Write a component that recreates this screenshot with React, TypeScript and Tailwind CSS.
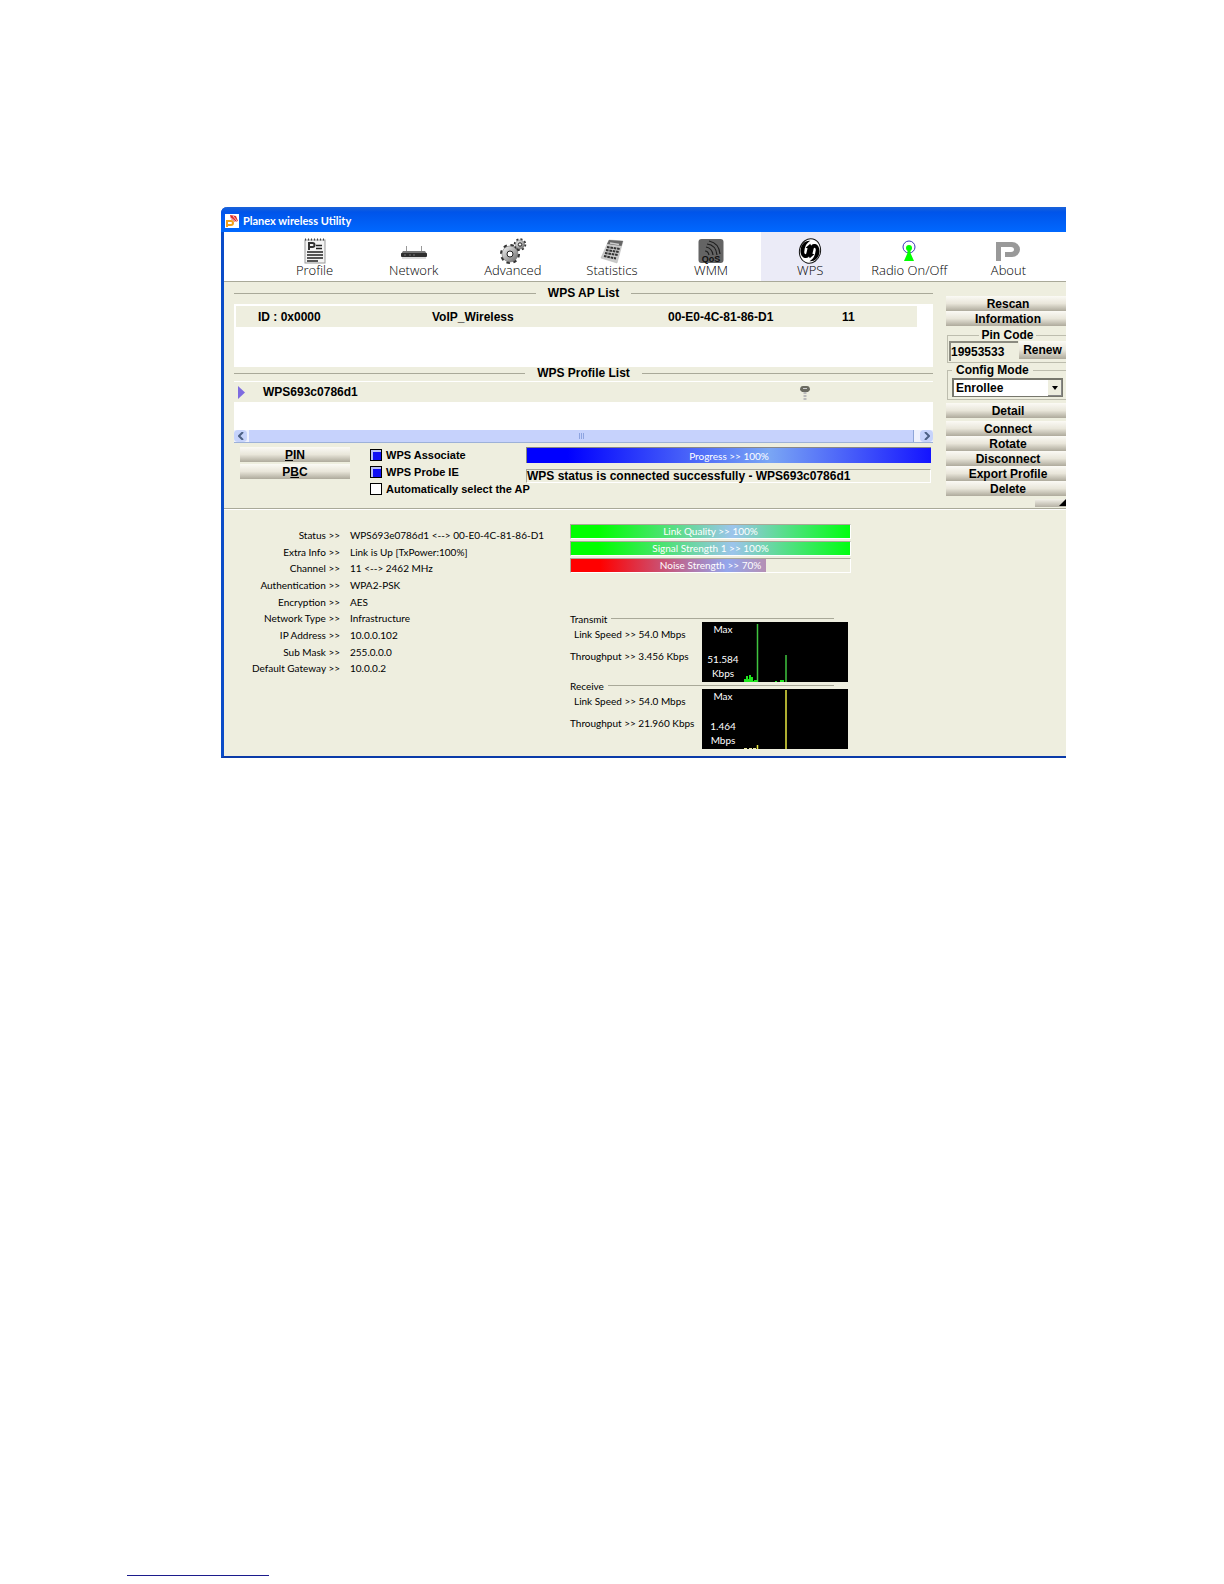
import type { ReactNode } from "react";
import clsx from "clsx";

const tabs = [
  { name: "Profile", icon: <ProfileIcon /> },
  { name: "Network", icon: <NetworkIcon /> },
  { name: "Advanced", icon: <GearsIcon /> },
  { name: "Statistics", icon: <CalculatorIcon /> },
  { name: "WMM", icon: <QosIcon /> },
  { name: "WPS", icon: <WpsIcon /> },
  { name: "Radio On/Off", icon: <RadioIcon /> },
  { name: "About", icon: <AboutIcon /> },
];

const status = [
  ["Status", "WPS693e0786d1 <--> 00-E0-4C-81-86-D1"],
  ["Extra Info", "Link is Up [TxPower:100%]"],
  ["Channel", "11 <--> 2462 MHz"],
  ["Authentication", "WPA2-PSK"],
  ["Encryption", "AES"],
  ["Network Type", "Infrastructure"],
  ["IP Address", "10.0.0.102"],
  ["Sub Mask", "255.0.0.0"],
  ["Default Gateway", "10.0.0.2"],
];

function ProfileIcon() {
  return (
    <svg width="26" height="26" viewBox="0 0 26 26">
      <rect x="3" y="2" width="20" height="23" fill="#f4f4f4" stroke="#999" />
      <path d="M3 1.500h20" stroke="#444" strokeWidth="2" strokeDasharray="1 2" />
      <path d="M7 12V5h3.500a2 2 0 0 1 0 4H7" fill="none" stroke="#333" strokeWidth="2" />
      <path d="M14 7.500h6M14 10.500h6M5 14h16M5 17h16M5 20h16M5 23h11" stroke="#222" strokeWidth="1.500" />
    </svg>
  );
}

function NetworkIcon() {
  return (
    <svg width="26" height="26" viewBox="0 0 26 26">
      <path d="M5.500 8v6M20.500 8v6" stroke="#999" />
      <path d="M2 13h22l2 3H0z" fill="#777" />
      <rect x="0" y="15" width="26" height="4" rx="1" fill="#2f2f2f" />
      <path d="M3 17h2M8 17h2M12 17h2" stroke="#777" />
      <path d="M1 20h24" stroke="#bbb" />
    </svg>
  );
}

function GearsIcon() {
  return (
    <svg width="28" height="26" viewBox="0 0 28 26">
      <defs>
        <linearGradient id="steel" x1="0" y1="0" x2="1" y2="1">
          <stop offset="0" stopColor="#fafafa" />
          <stop offset="1" stopColor="#666" />
        </linearGradient>
      </defs>
      <circle cx="11" cy="16" r="8.500" fill="none" stroke="#333" strokeWidth="3" strokeDasharray="3.300 3.400" />
      <circle cx="11" cy="16" r="8" fill="url(#steel)" stroke="#777" strokeWidth=".6" />
      <circle cx="11" cy="16" r="3" fill="#fff" stroke="#222" />
      <circle cx="21" cy="6.500" r="5" fill="none" stroke="#333" strokeWidth="2.500" strokeDasharray="1.900 2" />
      <circle cx="21" cy="6.500" r="4.500" fill="url(#steel)" stroke="#777" strokeWidth=".6" />
      <circle cx="21" cy="6.500" r="1.700" fill="#fff" stroke="#222" />
    </svg>
  );
}

function CalculatorIcon() {
  return (
    <svg width="26" height="26" viewBox="0 0 26 26">
      <path d="M10 2l14 1-6 22L2 20z" fill="#c9c9c9" stroke="#bbb" strokeWidth=".6" />
      <path d="M10 2l14 1-1.500 5L8 6z" fill="#666" />
      <path d="M11 5l9 1.500" stroke="#ccc" strokeWidth="1.500" />
      <path d="M8 9l13 2M7 12l13 2M6 15l13 2M5 18l12 2.500" stroke="#333" strokeWidth="2" strokeDasharray="2.600 .8" />
    </svg>
  );
}

function QosIcon() {
  return (
    <svg width="26" height="26" viewBox="0 0 26 26">
      <rect x="0.500" y="1" width="25" height="24" rx="3" fill="#646464" />
      <g fill="none" stroke="#1d1d1d" strokeWidth="1.200">
        <path d="M7 13q3 0 4 4M8 9q6 1 7 8M9 6q9 1 10 11M11 3q10 2 11 13" />
      </g>
      <text x="13" y="24" textAnchor="middle" className="font-['Liberation_Sans'] text-[9px] font-bold" fill="#111">QoS</text>
    </svg>
  );
}

function WpsIcon() {
  return (
    <svg width="26" height="26" viewBox="0 0 26 26">
      <g transform="rotate(14 13 13)">
        <ellipse cx="13" cy="13" rx="10.500" ry="12.300" fill="#fff" stroke="#111" />
        <path d="M11 3C5 4 3 9 3.500 14c.5 4 3 7 6 7 3 0 4-2 4-4V10l1.500.500L11.500 6 8 11l2 0v5c0 2-2.500 1.500-2.500-2C7 9 8 6 11 3z" />
        <path d="M15 23c6-1 8-6 7.500-11-.5-4-3-7-6-7-3 0-4 2-4 4v7l-1.500-.500L14.500 20l3.500-5-2 0v-5c0-2 2.500-1.500 2.500 2 .5 5-.5 8-3.500 11z" />
      </g>
    </svg>
  );
}

function RadioIcon() {
  return (
    <svg width="26" height="26" viewBox="0 0 26 26">
      <circle cx="13" cy="9" r="6" fill="#fff" stroke="#3a35b8" />
      <circle cx="13" cy="10" r="3" fill="#0f0" />
      <path d="M11.500 12h3v3l3.500 8H8l3.500-8z" fill="#0f0" />
    </svg>
  );
}

function AboutIcon() {
  return (
    <svg width="26" height="26" viewBox="0 0 26 26">
      <path d="M1 4h16a8 7.500 0 0 1 0 15h-7v-5h6a3 2.500 0 0 0 0-5H6v14H1z" fill="#999" />
    </svg>
  );
}

function SideButton({ children, className }: { children?: ReactNode; className?: string }) {
  return (
    <button
      className={clsx(
        "flex h-[15px] w-full items-center justify-center bg-linear-to-b from-[#fbfaf5] via-[#e9e6da] to-[#aeaa9c] pl-1 text-xs leading-3 font-bold",
        className,
      )}
    >
      {children}
    </button>
  );
}

function Rule({ children }: { children: ReactNode }) {
  return (
    <div className="flex items-center gap-3 pl-1 text-xs leading-3 font-bold">
      <span className="-ml-1 h-px flex-1 bg-[#a9a999]" />
      <h2>{children}</h2>
      <span className="h-px flex-1 bg-[#a9a999]" />
    </div>
  );
}

function Check({ label, checked }: { label: string; checked?: boolean }) {
  return (
    <label className="flex items-center gap-1 text-[11px] leading-4 font-bold">
      <input
        type="checkbox"
        defaultChecked={checked}
        className="size-3 shrink-0 appearance-none border border-black bg-white checked:bg-[#1010f5] checked:shadow-[inset_1px_1px_0_1px_#b9c0f5]"
      />
      {label}
    </label>
  );
}

function Meter({ label, value, className }: { label: string; value: number; className: string }) {
  return (
    <div className="relative h-[15px] border border-t-[#aaa99a] border-r-white border-b-white border-l-[#aaa99a]">
      <div className={clsx("h-full", className)} style={{ width: `${value}%` }} />
      <span className="absolute inset-0 text-center text-[10px] leading-[13px] text-white">
        {label} &gt;&gt; {value}%
      </span>
    </div>
  );
}

function Traffic({ title, speed, throughput, max, unit, children }: {
  title: string;
  speed: string;
  throughput: string;
  max: string;
  unit: string;
  children: ReactNode;
}) {
  return (
    <section>
      <div className="mr-[17px] flex h-[7px] items-center gap-1">
        <h3>{title}</h3>
        <span className="h-px flex-1 bg-[#a9a999]" />
      </div>
      <div className="flex justify-between pr-[3px]">
        <div className="flex flex-col gap-2 pt-[5px] whitespace-nowrap">
          <p className="pl-1">Link Speed &gt;&gt; {speed}</p>
          <p>Throughput &gt;&gt; {throughput}</p>
        </div>
        <div className="relative h-[60px] w-[146px] shrink-0 bg-black text-white">
          <svg width="146" height="60" viewBox="0 0 146 60" className="absolute inset-0">
            {children}
          </svg>
          <div className="flex h-full w-[42px] flex-col text-center leading-[14px]">
            <span>Max</span>
            <span className="mt-auto">{max}</span>
            <span className="pb-0.5">{unit}</span>
          </div>
        </div>
      </div>
    </section>
  );
}

export default function App() {
  return (
    <div className="flex min-h-screen flex-col bg-white pt-[207px] pb-2 font-['Liberation_Sans',sans-serif] text-black">
      <main className="mr-[158px] ml-[221px] rounded-tl-md border-b-2 border-l-3 border-b-[#0a3aa8] border-l-[#0a4cc8] bg-[#eeeedf]">
        <header className="-ml-[3px] flex h-[25px] items-center gap-1 rounded-tl-md bg-linear-to-b from-[#1a62d8] via-[#0054ea] via-20% to-[#0068ff] pt-0.5 pl-1 text-white">
          <svg width="14" height="14" viewBox="0 0 14 14">
            <path d="M0 0h14v14H0z" fill="#fff" />
            <path d="M5 1l6 1 2 5-3 1-4-3z" fill="#dd2c2c" />
            <path d="M6 4l5 4M8 2l4 5" stroke="#fff" strokeWidth=".7" />
            <path d="M2 13V7h4a2 2 0 0 1 0 4H2" fill="none" stroke="#f2a01c" strokeWidth="2" />
          </svg>
          <h1 className="font-[Lato,sans-serif] text-[11px] leading-4 font-bold">Planex wireless Utility</h1>
        </header>

        <nav className="flex h-[50px] border-b border-[#a9a999] bg-white pr-2 pl-[41px]">
          {tabs.map((tab) => (
            <button
              key={tab.name}
              className={clsx(
                "flex flex-1 flex-col items-center pt-1.5 font-['Open_Sans',sans-serif] text-[13px] leading-3 font-light",
                tab.name === "WPS" && "bg-[#ebebf7]",
              )}
            >
              {tab.icon}
              {tab.name}
            </button>
          ))}
        </nav>

        <div className="flex gap-[13px] border-b border-[#a9a999] pl-2.5">
          <div className="flex-1">
            <div className="pt-[5px] pb-[5px]">
              <Rule>WPS AP List</Rule>
            </div>
            <div className="h-[63px] bg-white pt-0.5 pr-4 pl-0.5">
              <table className="w-full table-fixed bg-[#eeeedf] text-left text-xs font-bold">
                <tbody>
                  <tr className="h-[21px]">
                    <td className="w-[196px] pl-[22px]">ID : 0x0000</td>
                    <td className="w-[236px]">VoIP_Wireless</td>
                    <td className="w-[174px]">00-E0-4C-81-86-D1</td>
                    <td>11</td>
                  </tr>
                </tbody>
              </table>
            </div>
            <div className="pb-0.5">
              <Rule>WPS Profile List</Rule>
            </div>
            <div className="border-t border-white">
              <table className="w-full table-fixed text-left text-xs font-bold">
                <tbody>
                  <tr className="h-5">
                    <td className="w-[29px] pl-1">
                      <svg width="7" height="13" viewBox="0 0 7 13">
                        <path d="M0 0l7 6.500L0 13z" fill="#7d6be0" />
                      </svg>
                    </td>
                    <td>WPS693c0786d1</td>
                    <td className="w-[133px]">
                      <svg width="10" height="15" viewBox="0 0 10 15">
                        <path d="M0 5q0-4 3-4h4q3 0 3 4l-2 2H2z" fill="#6a6a60" />
                        <path d="M3 3.500h4" stroke="#ccc" />
                        <path d="M5 7v8" stroke="#bbb" strokeWidth="3" strokeDasharray="2 1" />
                      </svg>
                    </td>
                  </tr>
                </tbody>
              </table>
              <div className="h-7 bg-white" />
              <div className="flex h-[13px] border-b border-[#9db1d8] bg-[#eef1fd]">
                <button aria-label="Scroll left" className="flex w-[13px] items-center justify-center rounded-sm bg-[#c6d3fb]">
                  <svg width="6" height="8" viewBox="0 0 6 8"><path d="M5 0L1 4l4 4" fill="none" stroke="#4d6185" strokeWidth="2" /></svg>
                </button>
                <div className="mr-1.5 ml-0.5 flex flex-1 items-center justify-center gap-px border-r border-[#8fa6d8] bg-[#c6d2fc]">
                  <span className="h-1.5 w-px bg-[#8ea4e0]" />
                  <span className="h-1.5 w-px bg-[#8ea4e0]" />
                  <span className="h-1.5 w-px bg-[#8ea4e0]" />
                </div>
                <button aria-label="Scroll right" className="flex w-[13px] items-center justify-center rounded-sm bg-[#c6d3fb]">
                  <svg width="6" height="8" viewBox="0 0 6 8"><path d="M1 0l4 4-4 4" fill="none" stroke="#4d6185" strokeWidth="2" /></svg>
                </button>
              </div>
            </div>
            <div className="flex pt-1 pr-0.5 pl-1.5">
              <div className="flex w-[110px] flex-col gap-0.5">
                <SideButton className="pr-1"><u>P</u>IN</SideButton>
                <SideButton className="pr-1">P<u>B</u>C</SideButton>
              </div>
              <div className="ml-5 flex w-[156px] flex-col gap-px whitespace-nowrap">
                <Check label="WPS Associate" checked />
                <Check label="WPS Probe IE" checked />
                <Check label="Automatically select the AP" />
              </div>
              <div className="flex-1">
                <div className="relative h-4 border-t border-l border-[#888] bg-linear-to-r/srgb from-[#0000ff] from-10% via-[#7aa6f4] via-60% to-[#1414ff]">
                  <span className="absolute inset-0 text-center font-[Lato,sans-serif] text-[10px] leading-4 text-white">Progress &gt;&gt; 100%</span>
                </div>
                <p className="mt-1.5 border border-t-[#a9a999] border-r-white border-b-white border-l-[#a9a999] text-xs leading-3 font-bold">
                  WPS status is connected successfully - WPS693c0786d1
                </p>
              </div>
            </div>
          </div>

          <aside className="w-[120px] pt-3.5">
            <SideButton>Rescan</SideButton>
            <SideButton>Information</SideButton>
            <fieldset className="mt-[3px] ml-px border border-r-0 border-[#bdbdae] pb-px pl-px">
              <legend className="mx-auto px-0.5 text-xs leading-3 font-bold">Pin Code</legend>
              <div className="flex gap-px">
                <input
                  aria-label="Pin Code"
                  defaultValue="19953533"
                  className="h-5 w-[69px] border-t-2 border-l-2 border-[#8b8b80] text-xs font-bold outline-none"
                />
                <button className="h-[18px] flex-1 bg-linear-to-b from-[#fbfaf5] via-[#e9e6da] to-[#aeaa9c] text-xs font-bold">Renew</button>
              </div>
            </fieldset>
            <fieldset className="mt-px ml-px border border-r-0 border-[#bdbdae] pr-[3px] pb-0.5 pl-1">
              <legend className="px-1 text-xs leading-3 font-bold">Config Mode</legend>
              <div className="relative pt-0.5">
                <select
                  aria-label="Config Mode"
                  className="block h-[19px] w-full appearance-none border-t-2 border-r border-b border-l-2 border-[#77776d] bg-white pl-0.5 text-xs leading-4 font-bold"
                >
                  <option>Enrollee</option>
                </select>
                <span className="pointer-events-none absolute top-1 right-px flex h-4 w-3.5 items-center justify-center border-r border-b border-[#888] bg-[#eeeedf]">
                  <svg width="6" height="4" viewBox="0 0 6 4"><path d="M0 0h6L3 4z" /></svg>
                </span>
              </div>
            </fieldset>
            <SideButton className="mt-[3px]">Detail</SideButton>
            <SideButton className="mt-[3px]">Connect</SideButton>
            <SideButton>Rotate</SideButton>
            <SideButton>Disconnect</SideButton>
            <SideButton>Export Profile</SideButton>
            <SideButton>Delete</SideButton>
            <button aria-label="Collapse" className="mt-[3px] mb-px ml-auto flex h-2 w-[31px] justify-end bg-linear-to-b from-[#f4f2ea] to-[#b5b1a4]">
              <svg width="7" height="7" viewBox="0 0 7 7"><path d="M7 0v7H0z" /></svg>
            </button>
          </aside>
        </div>

        <div className="flex border-t border-white pt-3.5 pb-[7px] font-[Lato,sans-serif] text-[10px] leading-[14px]">
          <dl className="grid h-[154px] w-[346px] auto-rows-fr grid-cols-[116px_1fr] gap-x-2.5 pt-1">
            {status.map(([label, value]) => (
              <div key={label} className="contents">
                <dt className="text-right">{label} &gt;&gt;</dt>
                <dd>{value}</dd>
              </div>
            ))}
          </dl>
          <div className="w-[281px]">
            <div className="flex flex-col gap-0.5">
              <Meter label="Link Quality" value={100} className="bg-linear-to-r/srgb from-[#00ff00] from-10% via-[#9cc4ec] via-58% to-[#00ff10]" />
              <Meter label="Signal Strength 1" value={100} className="bg-linear-to-r/srgb from-[#00ff00] from-10% via-[#9cc4ec] via-58% to-[#00ff10]" />
              <Meter label="Noise Strength" value={70} className="bg-linear-to-r/srgb from-[#ff0000] from-15% via-[#93a6ec] via-80% to-[#b58fb4]" />
            </div>
            <div className="pt-[42px]">
              <Traffic title="Transmit" speed="54.0 Mbps" throughput="3.456 Kbps" max="51.584" unit="Kbps">
                <path d="M55.500 2v58M84 33v27" stroke="#3fc43f" strokeWidth="1.500" />
                <path d="M42 60v-3h2v-3h2v3h1v-4h2v2h2v4h1v-1h3v2zM73 60v-1h2v1zM78 60v-2h4v2z" fill="#1fe81f" />
              </Traffic>
              <Traffic title="Receive" speed="54.0 Mbps" throughput="21.960 Kbps" max="1.464" unit="Mbps">
                <path d="M84 1v59M55.500 56v4" stroke="#e8e840" strokeWidth="1.500" />
                <path d="M42 59.500h3M47 59.500h3M51 59.500h3" stroke="#e8e8a0" />
              </Traffic>
            </div>
          </div>
        </div>
      </main>
      <div className="mt-auto ml-[127px] w-[142px] border-b border-[#1c1c8c]" />
    </div>
  );
}
